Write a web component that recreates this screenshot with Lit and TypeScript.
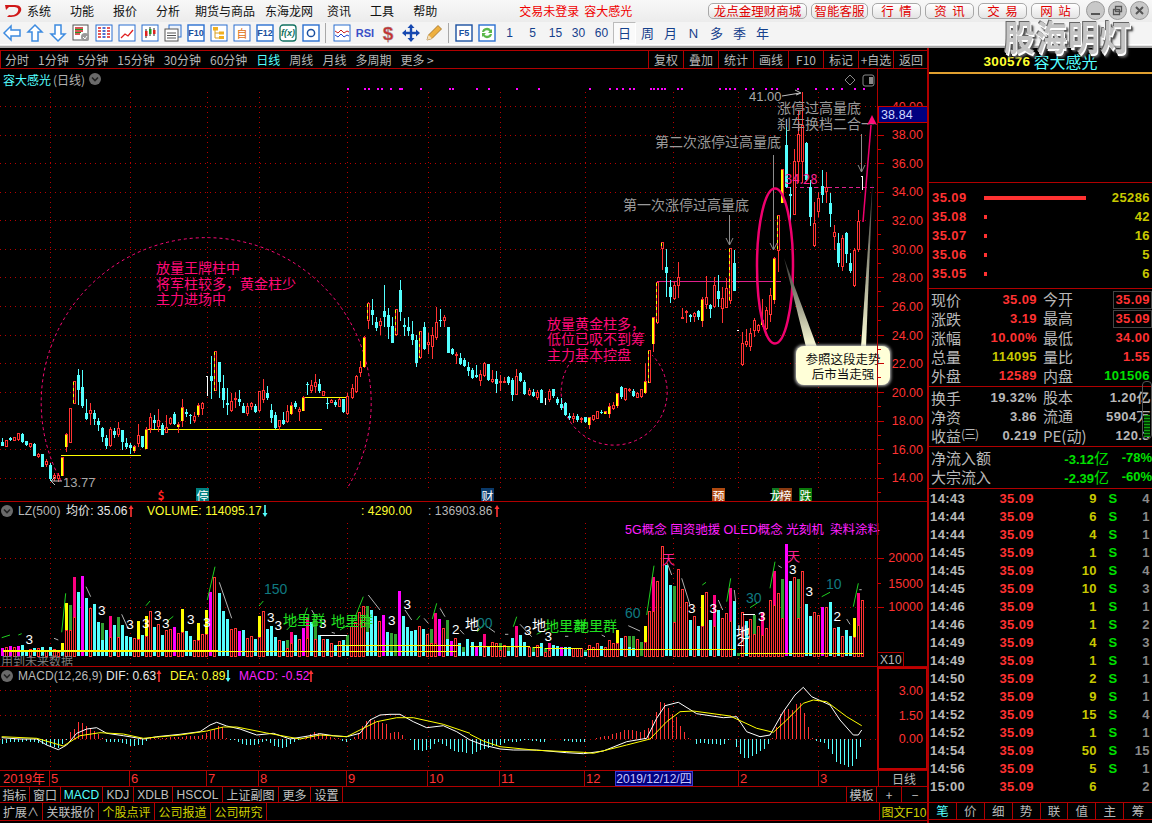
import { LitElement, html, css, svg } from "lit";
import { customElement } from "lit/decorators.js";

const C1 = `7 625 636 648 648 c;19 630 630 651 651 r;31 620 625 630 632 c;43 620 622 632 632 r;55 608 610 630 632 r;67 610 612 636 640 c;79 632 634 646 648 c;91 638 640 650 655 r;103 640 642 678 678 c;115 670 672 682 684 r;127 672 672 710 712 c;139 688 692 706 710 r;151 700 704 748 752 c;163 730 735 748 752 r;175 728 735 748 755 r;187 680 680 738 738 y;199 608 612 652 665 y;211 534 534 638 638 r;223 452 454 522 522 d;235 418 435 480 525 c;247 420 470 528 534 c;259 508 548 568 570 c;271 520 540 552 585 r;283 540 548 568 585 c;295 565 572 585 602 c;307 590 593 622 636 c;319 615 625 648 656 c;331 592 596 648 650 r;343 595 602 615 625 c;355 575 594 616 622 r;367 600 600 636 660 c;379 625 638 650 658 c;391 640 646 654 672 c;403 645 648 664 668 y;415 582 615 642 650 r;427 618 618 652 655 c;439 590 596 656 658 y;451 550 562 596 610 r;463 555 570 580 596 c;475 538 570 590 605 r;487 580 585 615 615 c;499 556 590 608 610 r;511 560 565 582 586 r;523 545 552 582 584 c;535 575 582 590 610 y;547 506 530 574 590 y;559 538 545 553 562 c;571 553 556 558 582 c;583 545 558 572 578 r;595 520 525 556 562 y;607 516 520 538 555 r;633 378 438 452 508 c;645 364 364 482 484 d;657 396 396 456 505 c;669 435 474 510 535 c;681 474 518 524 555 c;693 488 514 542 545 r;705 485 503 510 535 r;717 480 507 515 528 c;729 520 528 548 550 c;741 518 528 552 558 r;753 516 520 532 540 r;765 522 527 546 550 c;777 482 484 544 546 r;789 448 480 510 520 r;801 468 488 504 510 c;813 522 540 565 580 c;825 545 555 595 598 c;837 570 570 590 600 r;849 545 570 582 584 c;861 525 544 575 578 r;873 515 526 552 555 y;885 513 518 532 537 c;897 530 538 545 572 r;909 498 500 542 544 y;921 455 462 466 494 c;933 450 465 484 490 r;945 432 456 472 488 r;957 448 462 482 488 c;969 484 484 497 497 r;981 505 520 522 537 c;993 506 510 518 520 r;1005 510 515 525 532 c;1017 504 506 530 532 r;1029 508 508 545 548 c;1041 488 497 552 555 r;1056 462 474 504 506 r;1068 436 438 486 488 r;1080 394 412 430 440 r;1092 318 320 412 414 y;1104 216 218 272 296 d;1116 208 240 255 285 c;1128 262 276 294 302 c;1140 264 274 288 316 r;1152 165 243 260 290 c;1164 234 254 290 328 c;1176 262 288 338 340 c;1188 236 238 316 318 d;1200 150 180 245 272 c;1212 265 285 290 318 c;1224 260 292 302 318 c;1236 272 312 330 345 c;1249 315 330 398 410 c;1261 304 304 385 387 d;1273 277 290 356 360 c;1285 310 337 344 372 r;1297 290 316 352 388 r;1309 232 276 324 330 r;1321 237 270 272 290 c;1333 255 262 274 290 r;1345 290 292 368 370 c;1357 353 358 372 376 c;1369 366 372 372 402 r;1381 370 384 402 404 c;1393 385 390 408 412 c;1405 396 412 424 437 c`;
const C2 = `7 415 420 445 448 c;19 405 434 440 445 c;31 420 432 452 468 r;43 396 398 438 440 r;55 402 402 450 452 c;67 420 447 456 460 r;79 422 447 462 490 c;91 436 452 458 484 r;103 440 452 456 458 r;115 438 441 460 464 c;127 445 451 495 514 c;139 418 438 494 496 r;151 425 428 452 456 c;163 450 455 492 494 c;177 475 480 494 497 r;189 478 486 498 500 c;201 480 486 504 510 r;213 478 480 518 520 c;237 478 482 510 515 r;249 476 476 498 505 c;261 500 507 520 524 c;273 503 522 534 540 c;285 515 518 555 558 c;297 550 558 564 570 c;309 550 558 568 578 r;321 552 558 570 576 c;333 560 565 566 580 r;345 560 562 576 578 c;357 560 562 584 598 y;369 555 556 570 572 r;381 544 544 566 568 r;393 540 545 548 553 c;405 542 544 552 552 y;417 520 528 552 564 y;429 515 524 536 540 r;441 488 490 528 535 y;453 468 472 500 506 c;465 474 474 510 512 r;477 475 478 482 486 r;489 478 484 498 500 c;501 486 488 504 505 r;513 476 478 500 505 r;525 400 454 490 492 y;537 360 360 458 460 d;549 262 262 342 365 y;561 155 155 280 282 d;575 36 36 58 120 d;587 58 112 130 200 c;599 150 170 200 218 c;611 155 164 208 210 r;623 95 142 168 204 r;635 235 260 266 268 r;647 240 244 250 278 r;659 252 255 262 276 c;671 245 248 262 275 r;683 240 244 262 270 c;695 200 206 272 292 y;709 138 200 224 236 r;721 222 226 236 265 c;733 140 165 232 234 r;745 135 184 208 232 c;757 170 205 236 278 r;769 145 175 234 234 r;781 55 55 212 222 d;793 60 98 182 182 c;817 305 340 406 408 r;829 298 332 344 350 r;841 295 310 350 364 r;853 265 270 302 320 r;865 282 285 304 310 r;877 206 270 285 290 y;889 232 240 298 300 r;901 175 196 254 275 r;913 82 84 210 222 y`;
const C3 = `235 406 406 512 575 d;247 268 268 368 368 y;259 118 195 322 325 c;271 320 343 348 430 c;283 207 243 404 405 r;295 90 163 245 310 r;307 35 135 245 310 r;319 185 188 300 302 c;331 300 322 410 438 c;343 365 430 498 502 r;355 335 355 395 410 r;367 270 318 345 370 c;379 275 322 335 370 r;391 340 368 403 440 c;403 435 455 470 510 r;415 460 490 548 560 c;427 465 475 560 573 r;439 455 460 522 550 c;451 520 550 572 580 c;463 505 510 618 622 r;475 390 422 510 515 r`;

const V1 = `7m460 19r456 31m452 43r456 55m454 67c450 79c465 91r462 103c458 115r460 127c455 139r465 151c456 163r462 175r470 187y444-466c 199y324-405r 211g330-405r 223p246-365r 235c290 247m243 259c308 271r340 283c327 295c380 307g384-435c 319c405 331p364-425r 343c390 355g366-425r 367c390 379c424 391c426 403r430 415y378-432r 427c420 439y363-424r 451r349 463c396 475r388 487c420 499r406 511r402 523m396 535r414 547y342-412r 559c408 571c424 583r435 595y384-434r 607r418 619y345-416r 631m290 643r246 657c294 669c348 681c372 693r402 705r400 717m408 729c405 741r430 753r422 765c432 777y362-426r 789r348 801c402 813c393 825c426 837r436 849c438 861g435-460r 873p411-445r 885c420 897r432 909m400 921p366-430r 933c380 945g375-432r 957c420 969r432 981c432 993r445 1005c450 1017r438 1029c435 1041g420-450c 1053r392 1065r382 1077r352 1089r334 1101g334-410c 1113c345 1125c363 1137r378 1149m360 1161c410 1173g414-470c 1185g417 1197m288 1209c362 1221c396 1233c408 1245c404 1257r392 1269c402 1281r416 1293g402-445r 1305p354-445r 1317m372 1329r400 1341g375-432c 1353m438 1365r430 1377c444 1389g455-472c 1401c432`;
const V2 = `7c440 19m455 31c442 43p416-455r 55c455 67r440 79r445 91g444-465r 103r450 115g452-468c 127c430 139p393-455r 151c420 163c442 177r455 189g456-470c 201r450 213c445 225g460-472r 237p444-465r 249c450 261c452 273m455 285c456 297c456 309r458 321r460 333r460 345g464-472c 357r450 369r456 381r445 393c454 405r456 417r435 429r444 441y405-444r 453c430 465r424 477g423-456c 489g423-458c 501r432 513g442 525y393-440r 537r348 549p245-348r 561r258 575r153 587c210 599c270 611g272-380r 623r222 635r282 647r322 659c375 671r364 683c393 697y300-392r 709r292 721c375 733p300-392r 745c345 757r370 769r354 781p280-378r 793c318 803g474 817r352 829c378 841r372 853g360-418r 865r394 877p352-420r 889r400 901r316 913p228-330r 925r295 937g252-370r 949m148 961c258 973r246 985g252-370r 997r228 1009c328 1021c363 1033r352 1045r360 1057m336 1069r336 1081c322 1093r400 1105c396 1117r423 1129c405 1141c423 1153y370-426r 1165p293-390r 1177r316`;

const M1: number[] = [-14,-12,-10,-10,-8,-8,-6,-10,-10,-12,-16,-18,-20,-24,-26,-16,-2,20,30,52,48,38,32,24,16,2,-8,-8,-10,-10,-12,-16,-20,-20,-18,-18,-6,2,3,4,4,4,6,6,6,6,8,8,8,10,12,18,24,30,38,36,4,-2,-4,-8,-16,-18,-18,-18,-14,-8,-6,-12,-20,-24,-26,-24,-14,-10,-4,2,8,14,20,18,14,8,6,4,3,-6,-10,-2,6,18,40,55,60,58,52,48,44,18,20,20,12,0,-2,-32,-34,-36,-34,-30,-14,-10,-14,-20,-30,-36,-40,-40,-42];
const M2: number[] = [-44,-38,-34,-30,-26,-22,-20,-18,-12,-6,-8,-8,-6,-4,-4,-6,-6,-8,-8,0,0,0,0,-6,-6,-8,-8,-8,-8,0,0,2,5,8,10,14,18,22,26,28,26,24,22,26,34,56,80,110,108,92,76,66,40,22,2,0,-14,-12,-12,-14,-14,-16,-18,-14,-2,0,-24,-46,-56,-56,-52,-46,-36,-30,-14,4,36,74,88,90,88,104,108,78,36,4,-6,-10,-12,-30,-46,-70,-74,-78,-84,-80,-60,-24];

const WHITE1 = "5,218 60,222 110,222 140,240 175,254 200,240 230,205 260,192 290,188 320,205 370,212 430,222 470,215 540,208 600,200 630,180 650,172 680,183 720,192 770,210 820,205 870,222 930,212 960,206 1000,212 1040,215 1080,205 1110,165 1140,150 1170,148 1200,148 1240,170 1280,188 1330,182 1370,200 1410,225";
const YEL1 = "5,215 110,220 190,243 240,212 300,203 370,207 430,220 540,210 620,198 670,186 710,186 800,204 900,222 960,210 1040,215 1090,190 1130,170 1190,158 1240,158 1330,178 1410,205";
const WHITE2 = "0,225 40,240 90,252 130,255 200,255 290,263 340,266 400,258 470,230 530,220 560,160 585,122 625,112 680,146 760,158 800,155 830,200 870,215 900,210 940,140 975,90 1000,67 1025,95 1080,120 1110,165 1150,210 1165,210 1175,195";
const YEL2 = "0,208 40,228 90,245 200,256 340,262 370,265 470,240 540,222 590,170 630,140 670,138 780,153 860,190 910,202 950,165 1000,115 1030,105 1070,110 1130,155 1175,182";

const pts = (s: string, ox: number, oy: number) =>
  s.split(" ").map((p) => { const [x, y] = p.split(",").map(Number); return `${(ox + x / 3).toFixed(1)},${(oy + y / 3).toFixed(1)}`; }).join(" ");

const candles = (src: string, ox: number, oy: number) =>
  src.split(";").map((row) => {
    const [xs, a, b, c, d, t] = row.split(" ");
    const X = Math.round(ox + +xs / 3);
    const wt = Math.round(oy + +a / 3), bt = Math.round(oy + +b / 3), bb = Math.max(Math.round(oy + +c / 3), Math.round(oy + +b / 3) + 1), wb = Math.round(oy + +d / 3);
    if (t === "c") {
      return svg`<rect x=${X} y=${wt} width="1" height=${Math.max(wb - wt, 1)} class="fc"></rect><rect x=${X - 1} y=${bt} width="3" height=${bb - bt} class="fc"></rect>`;
    }
    return svg`
      ${wt < bt ? svg`<rect x=${X} y=${wt} width="1" height=${bt - wt} class="fr"></rect>` : ""}
      ${wb > bb ? svg`<rect x=${X} y=${bb} width="1" height=${wb - bb} class="fr"></rect>` : ""}
      <rect x=${X - 0.5} y=${bt + 0.5} width="2" height=${bb - bt - 1 > 0 ? bb - bt - 1 : 0.5} class="hollow"></rect>
      ${t === "y" ? svg`<rect x=${X - 1} y=${bt + 1} width="2" height=${Math.max(bb - bt - 1, 1)} class="fy"></rect>` : ""}
      ${t === "d" ? svg`<line x1=${X - 0.5} x2=${X - 0.5} y1=${bt + 1} y2=${bb} class="dash-y"></line>` : ""}`;
  });

const volClass: Record<string, string> = { m: "fm", c: "fc", y: "fy", g: "fg", p: "fp" };
const VBOT = 656;
const volumes = (src: string, ox: number) =>
  src.split(" ").map((tok) => {
    const m = tok.match(/^(\d+)([a-z])(\d+)(?:-(\d+)([a-z]))?$/);
    if (!m) return "";
    const X = Math.round(ox + +m[1] / 3);
    const top = Math.round(495 + +m[3] / 3);
    const col = m[2];
    const split = m[4] ? Math.round(495 + +m[4] / 3) : VBOT;
    const hollow = (y1: number) => svg`<rect x=${X - 0.5} y=${y1 + 0.5} width="2" height=${Math.max(VBOT - y1 - 0.5, 0.5)} class="hollow"></rect>`;
    if (col === "r") return hollow(top);
    const head = svg`<rect x=${X - 1} y=${top} width="3" height=${split - top} class=${volClass[col]}></rect>`;
    if (!m[5]) return head;
    if (m[5] === "r") return svg`${hollow(split)}${head}`;
    return svg`${head}<rect x=${X - 1} y=${split} width="3" height=${VBOT - split} class=${volClass[m[5]]}></rect>`;
  });

const macdBars = (arr: number[], ox: number) =>
  arr.map((v, i) => {
    const X = Math.round(ox + (7 + i * 12) / 3);
    const h = Math.abs(v) / 3;
    if (h === 0) return "";
    return svg`<rect x=${X} y=${v > 0 ? 739 - h : 739} width="1" height=${h} class=${v > 0 ? "fr" : "fc"}></rect>`;
  });

const VGRID = [50, 130, 207, 259, 347, 428, 500, 585, 673, 738, 818];
const vlines = (y1: number, y2: number) => VGRID.map((x) => svg`<line x1=${x + 0.5} x2=${x + 0.5} y1=${y1} y2=${y2} class="dot"></line>`);
const hline = (y: number) => svg`<line x1="0" x2="878" y1=${y + 0.5} y2=${y + 0.5} class="dot"></line>`;

const T = (x: number, y: number, s: string, cls: string) => svg`<text x=${x} y=${y} class=${cls}>${s}</text>`;
const upArrow = (x: number, y: number, cls: string, up = true) => svg`
  <path d=${up ? `M${x} ${y - 6}l-2.5 4h1.7v8h1.6v-8h1.7z` : `M${x} ${y + 6}l-2.5 -4h1.7v-8h1.6v8h1.7z`} class=${cls}></path>`;
const chev = (x: number, y: number) => svg`
  <circle cx=${x} cy=${y} r="6" fill="#6a6a6a"></circle>
  <path d=${`M${x - 3} ${y - 1.5}l3 3l3 -3`} fill="none" stroke="#222" stroke-width="1.6"></path>`;
const grayArrow = (x: number, y1: number, y2: number) => svg`
  <path d=${`M${x + 0.5} ${y1}V${y2}M${x - 3} ${y2 - 7}L${x + 0.5} ${y2}L${x + 4} ${y2 - 7}`} fill="none" stroke="#8c8c8c" stroke-width="1"></path>`;

const PRICE_Y = [[478, "14.00"], [449.5, "16.00"], [421, "18.00"], [392.5, "20.00"], [363.5, "22.00"], [335.5, "24.00"], [306.5, "26.00"], [277.5, "28.00"], [249.5, "30.00"], [220.5, "32.00"], [192, "34.00"], [163.5, "36.00"], [135, "38.00"], [106.5, "40.00"]] as [number, string][];

const DOTS = [945,990,1000,1025,1035,1060,1085,1090,1143,1220,1230,1295,1328,1404,1462].map((z) => z / 2.72).concat([35,90,110,125,145,155,200,210,220,230,240,275,285,388,405,415,430,460,480,515,530,545,600,650,680,695,720,755,780].map((z) => 576 + z / 2.72));

const GREEN_STROKES: [number, string][] = [
  [0, "5,428 30,420"],[0, "55,420 65,416"],[0, "185,412 197,295"],[0, "438,332 450,318"],[0, "500,380 520,364"],[0, "622,315 645,215"],[0, "777,333 790,318"],[0, "860,405 895,370"],[0, "910,370 922,338"],[0, "1020,405 1060,380 1090,305"],[0, "1250,375 1260,362"],[0, "1297,372 1310,325"],
  [470, "530,360 552,212"],[470, "130,395 140,365"],[470, "200,418 215,410"],[470, "770,320 782,250"],[470, "697,270 708,262"],[470, "900,280 915,200"],[470, "840,338 865,322"],[470, "1055,305 1080,292"],[470, "1150,335 1165,265"],[470, "22,410 45,385"],
];
const WHITE_STROKES: [number, string][] = [
  [0, "258,275 272,305"],[0, "162,430 175,435"],[0, "365,358 385,402"],[0, "658,262 695,370"],[0, "1105,300 1140,345"],[0, "1215,345 1235,375"],[0, "1272,370 1285,385"],[0, "1320,340 1335,365"],[0, "1380,405 1392,418"],[0, "935,345 950,370"],[0, "995,412 1005,415"],
  [470, "52,395 75,412"],[470, "150,388 185,425"],[470, "475,392 510,408"],[470, "592,205 605,240"],[470, "635,250 660,330"],[470, "745,315 758,345"],[470, "793,285 797,320"],[470, "925,212 935,218"],[470, "1130,372 1140,388"],[470, "105,418 115,418"],[470, "285,424 295,424"],[470, "395,420 405,425"],[470, "1168,284 1175,284"],
];
const VOL_LABELS: [number, number, string, string][] = [
  [0,88,"3","v3"],[0,305,"3","v3"],[0,390,"3","v3"],[0,437,"3","v3"],[0,473,"3","v3"],[0,497,"3","v3"],[0,572,"3","v3"],[0,620,"3","v3"],[0,812,"3","v3"],[0,835,"3","v3"],[0,968,"3","v3"],[0,1175,"3","v3"],[0,1222,"3","v3"],[0,1367,"2","v3"],
  [470,173,"3","v3"],[470,235,"3","v3"],[470,665,"3","v3"],[470,730,"3","v3"],[470,875,"3","v3"],[470,968,"3","v3"],[470,1018,"3","v3"],[470,812,"2","v3"],[470,1102,"2","v3"],
];
const VOL_Y: number[] = [432,345,388,385,360,385,373,382,367,392,385,376,328,404,405,424,340,340,365,222,288,438,364];

const ICONS: Record<string, unknown> = {
  left: svg`<path d="M2 10l7-7v4h9v6H9v4z" fill="#fff" stroke="#3d8be0" stroke-width="1.5"></path>`,
  up: svg`<path d="M10 2l7 7h-4v9H7V9H3z" fill="#fff" stroke="#3d8be0" stroke-width="1.5"></path>`,
  down: svg`<path d="M10 18l7-7h-4V2H7v9H3z" fill="#fff" stroke="#3d8be0" stroke-width="1.5"></path>`,
  check: svg`<rect x="2" y="2" width="15" height="15" fill="#fff" stroke="#555"></rect><path d="M4 5h8M4 8h8M4 11h5" stroke="#c22" stroke-width="1.4"></path><path d="M4 6.5h8M4 9.5h6" stroke="#292" stroke-width="1"></path><circle cx="14" cy="14" r="4" fill="#999"></circle><path d="M12 14l2 2 2-3" stroke="#fff" fill="none"></path>`,
  grid: svg`<rect x="2" y="2" width="16" height="16" fill="#fff" stroke="#2a6fd0"></rect><path d="M4 5h3M4 8h3M4 11h3M4 14h3" stroke="#d22" stroke-width="1.6"></path><path d="M8.5 5h3M8.5 8h3M8.5 11h3M8.5 14h3" stroke="#1a3fc0" stroke-width="1.6"></path><path d="M13 5h3M13 8h3M13 11h3M13 14h3" stroke="#d22" stroke-width="1.6"></path>`,
  line: svg`<rect x="2" y="2" width="16" height="16" fill="#fff" stroke="#2a6fd0"></rect><path d="M4 15l4-4 3 2 5-6" stroke="#e02020" fill="none" stroke-width="1.3"></path>`,
  candle: svg`<rect x="2" y="2" width="16" height="16" fill="#fff" stroke="#2a6fd0"></rect><path d="M6 6v9M10 4v9M14 5v8" stroke="#222"></path><rect x="5" y="8" width="2.5" height="5" fill="#d22"></rect><rect x="9" y="6" width="2.5" height="5" fill="#292"></rect><rect x="13" y="7" width="2.5" height="4" fill="#d22"></rect>`,
  win: svg`<rect x="6" y="2" width="12" height="12" fill="#eef4fc" stroke="#2a6fd0"></rect><rect x="2" y="6" width="13" height="12" fill="#fff" stroke="#555"></rect><path d="M4 10h9M4 12.5h9M4 15h9" stroke="#555"></path>`,
  f10: svg`<rect x="2" y="2" width="16" height="16" fill="#fff" stroke="#2a6fd0" stroke-width="1.4"></rect><text x="10" y="10" class="ict">F10</text>`,
  tree: svg`<rect x="2" y="2" width="16" height="16" fill="#fff" stroke="#2a6fd0"></rect><path d="M6 7v8h4M6 10h4" stroke="#d8a020" fill="none"></path><rect x="4" y="4" width="5" height="3.5" fill="#f0b020"></rect><rect x="10" y="8.5" width="5" height="3" fill="#f0b020"></rect><rect x="10" y="13" width="5" height="3" fill="#f0b020"></rect>`,
  zi: svg`<rect x="2" y="2" width="16" height="16" fill="#fff" stroke="#2a6fd0"></rect><text x="10" y="10" class="ict ict-o">自</text>`,
  f12: svg`<rect x="2" y="2" width="16" height="16" fill="#fff" stroke="#2a6fd0" stroke-width="1.4"></rect><text x="10" y="10" class="ict">F12</text>`,
  fx: svg`<rect x="2" y="2" width="16" height="16" rx="3" fill="#fff" stroke="#107060" stroke-width="1.3"></rect><text x="10" y="10" class="ict ict-t">f(x)</text>`,
  o: svg`<rect x="2" y="2" width="16" height="16" fill="#fff" stroke="#2a6fd0" stroke-width="1.4"></rect><circle cx="10" cy="10" r="3.6" fill="none" stroke="#1a50a0" stroke-width="1.5"></circle>`,
  wave: svg`<rect x="2" y="2" width="16" height="16" fill="#fff" stroke="#2a6fd0"></rect><path d="M3 8l3 2 3-3 3 3 3-2 2 1" stroke="#c22" fill="none"></path><path d="M3 12l3 2 3-3 3 3 3-2 2 1" stroke="#24c" fill="none"></path>`,
  rsi: svg`<text x="10" y="10" class="ict ict-r">RSI</text>`,
  dollar: svg`<text x="10" y="10" class="ict ict-d">$</text>`,
  move: svg`<path d="M10 1l3.5 4h-2.3v3.8H15V6.500l4 3.500-4 3.500v-2.300h-3.800V15h2.300L10 19l-3.500-4h2.300v-3.800H5v2.300L1 10l4-3.500v2.300h3.800V5H6.500z" fill="#1648b0"></path>`,
  pencil: svg`<path d="M3 17l1.500-5L14 2.500l3.500 3.500L8 15.500z" fill="#eeb040" stroke="#9a6a20" stroke-width=".8"></path><path d="M3 17l1.500-5 3.500 3.500z" fill="#f4dfb8"></path>`,
  f5: svg`<rect x="2" y="2" width="16" height="16" fill="#fff" stroke="#1a50a0" stroke-width="1.4"></rect><text x="10" y="10" class="ict">F5</text>`,
  refresh: svg`<rect x="2" y="2" width="16" height="16" fill="#fff" stroke="#2a6fd0" stroke-width="1.4"></rect><path d="M5 9a5 5 0 0 1 9-2l1-1v4h-4l1.500-1.500A3.200 3.200 0 0 0 7 9zM15 11a5 5 0 0 1-9 2l-1 1v-4h4l-1.500 1.500A3.200 3.200 0 0 0 13 11z" fill="#5bb84a"></path>`,
};
const ic = (n: string) => html`<span class="tb"><svg width="20" height="20" viewBox="0 0 20 20">${ICONS[n]}</svg></span>`;

const BOOK = [["35.09", 25286], ["35.08", 42], ["35.07", 16], ["35.06", 5], ["35.05", 6]] as [string, number][];
const TICKS = [["14:43",9,"S",4],["14:44",6,"S",1],["14:44",4,"S",1],["14:45",1,"S",1],["14:45",10,"S",4],["14:45",10,"S",3],["14:46",1,"S",1],["14:46",1,"S",2],["14:49",4,"S",3],["14:49",1,"S",1],["14:50",2,"S",1],["14:52",9,"S",1],["14:52",15,"S",4],["14:52",1,"S",1],["14:54",50,"S",15],["14:56",5,"S",1],["15:00",6,"",2]] as [string, number, string, number][];

@customElement("app-root")
export class AppRoot extends LitElement {
  static styles = css`
    :host { display: block; position: relative; width: 1152px; height: 823px; background: #000; overflow: hidden;
      font-family: "Noto Sans CJK SC", "Liberation Sans", sans-serif; font-size: 12px; line-height: 1; }
    .menubar { height: 22px; background: linear-gradient(#f8f8f8, #ececec); display: flex; align-items: center; color: #111; position: relative; }
    .logo { width: 20px; margin-left: 4px; display: flex; }
    .menu { display: flex; }
    .menu span { margin-right: 19px; }
    .login { color: #f00000; margin-left: 63px; display: flex; gap: 5px; }
    .btns { display: flex; margin-left: auto; gap: 4px; margin-right: 72px; }
    .btn { height: 16px; padding: 0; display: flex; align-items: center; justify-content: center; color: #e00000;
      background: linear-gradient(#fff, #e4e4e4); border: 1px solid #a8a8a8; border-radius: 5px; box-sizing: border-box; font-size: 12.5px; }
    .w97 { width: 99px; } .w57 { width: 57px; } .w49 { width: 49px; }
    .wins { position: absolute; right: 3px; top: 1px; display: flex; gap: 3px; }
    .win { width: 19px; height: 19px; border-radius: 50%; background: #c8c8c8; border: 1px solid #9a9a9a; box-sizing: border-box; display: flex; align-items: center; justify-content: center; }
    .toolbar { height: 23px; box-sizing: border-box; background: #f4f4f4; display: flex; align-items: center; border-bottom: 1px solid #fff; color: #14408c; font-family: "Liberation Sans", "Noto Sans CJK SC", sans-serif; }
    .tb { width: 23px; height: 22px; flex: none; display: flex; align-items: center; justify-content: center; }
    .sep { width: 1px; height: 20px; background: #a8a8a8; flex: none; }
    .sep1 { margin: 0 4px 0 3px; } .sep2 { margin: 0 3px 0 3px; }
    .num { font-size: 12px; }
    .num.on { background: #fafafa; border: 1px solid; border-color: #bbb #fff #fff #bbb; box-sizing: border-box; font-size: 13px; }
    .cjk { font-size: 13px; }
    .ict { font: bold 9px "Liberation Sans", sans-serif; fill: #1a50a0; text-anchor: middle; }
    .ict-o { fill: #e07010; font: 11px "Noto Sans CJK SC", sans-serif; }
    .ict-t { fill: #107060; font-style: italic; }
    .ict-r { font-size: 11px; fill: #3a50c8; }
    .ict-d { font-size: 19px; fill: #c83030; stroke: #999; stroke-width: .4; }
    .gray-strip { height: 2px; background: #a8a8a8; }
    .strip2 { height: 1px; background: #e8e8e8; }
    .body { height: 775px; display: flex; }
    .left { width: 928px; flex: none; display: flex; flex-direction: column; }
    .tabs { margin-top: 2px; height: 19px; box-sizing: border-box; border-top: 1px solid #b00000; border-bottom: 1px solid #b00000; border-left: 1px solid #b00000; display: flex; color: #b8b8b8; align-items: center; flex: none; }
    .tabs-l { display: flex; gap: 9px; padding-left: 4px; flex: 1; }
    .tabs-l .on { color: #54ffff; }
    .tabs-r { display: flex; height: 100%; }
    .tabs-r span { width: 35px; display: flex; align-items: center; justify-content: center; border-left: 1px solid #b00000; box-sizing: border-box; white-space: nowrap; }
    svg.pane { display: block; flex: none; }
    .axis { height: 16px; box-sizing: border-box; border-top: 1px solid #b00000; display: flex; flex: none; color: #ff3232; font-family: "Liberation Sans", sans-serif; font-size: 13px; position: relative; }
    .axis .cell { flex: none; padding-left: 1px; border-left: 1px solid #b00000; height: 100%; display: flex; align-items: center; box-sizing: border-box; white-space: nowrap; }
    .axis .y { width: 49px; border-left: 0; padding-left: 3px; font-family: "Liberation Sans", "Noto Sans CJK SC", sans-serif; }
    .axis .date { width: 78px; background: #000080; color: #c8c8ff; border: 1px solid #3a3ad0; justify-content: center; font-size: 12px; font-family: "Liberation Sans", "Noto Sans CJK SC", sans-serif; padding: 0; }
    .axis .end { margin-left: auto; width: 50px; justify-content: center; color: #b8b8b8; font-family: "Noto Sans CJK SC", sans-serif; font-size: 12px; }
    .row { height: 16px; box-sizing: border-box; border-top: 1px solid #b00000; display: flex; flex: none; color: #c0c0c0; align-items: stretch; }
    .row span { display: flex; align-items: center; justify-content: center; border-right: 1px solid #b00000; box-sizing: border-box; flex: none; }
    .row .lat { font-family: "Liberation Sans", "Noto Sans CJK SC", sans-serif; }
    .row .c { color: #54ffff; }
    .row .yl { color: #d0d000; }
    .row .push { margin-left: auto; border-left: 1px solid #b00000; }
    .row2 { height: 19px; border-bottom: 1px solid #b00000; }
    .right { flex: 1; border-left: 2px solid #b00000; box-sizing: border-box; margin-left: -1px; display: flex; flex-direction: column; position: relative; min-width: 0; }
    .code { height: 24px; margin-top: 2px; border-bottom: 2px solid #e0a030; display: flex; align-items: center; justify-content: center; gap: 3px; font-size: 16px; color: #54ffff; box-sizing: border-box; flex: none; }
    .code b { color: #ffff30; font: bold 13.500px "Liberation Sans", sans-serif; letter-spacing: .3px; }
    .blank { height: 109px; border-bottom: 1px solid #b00000; box-sizing: border-box; flex: none; }
    .book { height: 106px; padding-top: 5px; box-sizing: border-box; border-bottom: 1px solid #b00000; flex: none; }
    .brow { height: 19px; display: flex; align-items: center; padding: 0 2px 0 3px; }
    .val { font: bold 13px "Liberation Sans", sans-serif; letter-spacing: .4px; color: #ff3232; }
    .brow .bar-wrap { width: 102px; margin-left: 17px; display: flex; }
    .brow .bar { height: 4px; background: #ff3232; }
    .brow .q { margin-left: auto; color: #c8c800; }
    .sec { box-sizing: border-box; border-bottom: 1px solid #b00000; color: #b8b8b8; font-size: 15px; flex: none; }
    .s5 { height: 98px; padding-top: 1px; }
    .s3 { height: 60px; padding-top: 1px; }
    .s2 { height: 42px; padding-top: 1px; }
    .sr { height: 19px; display: flex; align-items: center; padding-left: 2px; position: relative; }
    .sr .lb { width: 106px; flex: none; display: flex; justify-content: space-between; white-space: nowrap; }
    .sr .lb .val { margin-left: auto; }
    .sr .lb2 { margin-left: 6px; flex: 1; padding-right: 2px; display: flex; justify-content: space-between; white-space: nowrap; }
    .val.g { color: #00e000; } .val.y { color: #c8c800; } .val.w { color: #b8b8b8; }
    .boxv { border: 1px solid #444; box-sizing: border-box; height: 18px; width: 39px; display: flex; align-items: center; justify-content: flex-end; margin-right: -2px; padding-right: 1px; }
    .narrow { font-size: 12px; letter-spacing: -1px; }
    .flow { display: flex; gap: 0; }
    .flow .amt { flex: 1; margin-left: 30px; text-align: right; color: #00e000; font: bold 13px "Liberation Sans", "Noto Sans CJK SC", sans-serif; white-space: nowrap; }
    .flow .amt i { font: 15px "Noto Sans CJK SC", sans-serif; }
    .flow .pct { width: 34px; margin-left: 9px; text-align: right; color: #00e000; font: bold 13px "Liberation Sans", sans-serif; }
    .ticks { height: 314px; box-sizing: border-box; border-bottom: 1px solid #b00000; flex: none; }
    .trow { height: 18px; display: grid; grid-template-columns: 50px 54px 63px 32px 1fr; align-items: center; padding: 0 2px 0 1px; text-align: right; }
    .trow .tm { text-align: left; color: #b8b8b8; }
    .trow .qt { color: #c8c800; }
    .trow .sd { color: #00e000; text-align: center; }
    .trow .n { color: #8a8a8a; }
    .btabs { height: 17px; display: flex; flex: none; box-sizing: border-box; color: #b8b8b8; border-bottom: 1px solid #b00000; }
    .btabs span { width: 28px; display: flex; align-items: center; justify-content: center; border-right: 1px solid #b00000; box-sizing: border-box; font-size: 12.500px; }
    .btabs .on { color: #54ffff; }
    .scroll { position: absolute; right: 0; top: 333px; width: 10px; height: 58px; border: 1px solid #555; border-radius: 4px; box-sizing: border-box; display: flex; align-items: flex-end; padding: 1px; }
    .scroll i { display: block; width: 100%; height: 22px; background: repeating-linear-gradient(#10a010 0 1px, #004000 1px 3px); }
    .wm { position: absolute; left: 1004px; top: 18px; font-size: 31px; font-weight: 700; color: #c4c4c4; letter-spacing: 1px; white-space: nowrap; line-height: 1;
      transform: scaleY(1.15); transform-origin: top left;
      text-shadow: 1px 1px 0 #fff, -1px -1px 0 #666, 2px 2px 1px #555, 3px 3px 2px #444; }

    .dot { stroke: #b80000; stroke-width: 1; stroke-dasharray: 1 4; shape-rendering: crispEdges; }
    .tick { stroke: #c80000; shape-rendering: crispEdges; }
    .frame { stroke: #b00000; shape-rendering: crispEdges; fill: none; }
    .fc { fill: #54ffff; shape-rendering: crispEdges; }
    .fr { fill: #ff3232; shape-rendering: crispEdges; }
    .fy { fill: #ffff00; shape-rendering: crispEdges; }
    .fm { fill: #ff00ff; shape-rendering: crispEdges; }
    .fg { fill: #30a030; shape-rendering: crispEdges; }
    .fp { fill: #ff0080; shape-rendering: crispEdges; }
    .hollow { fill: #000; stroke: #ff3232; stroke-width: 1; shape-rendering: crispEdges; }
    .dash-y { stroke: #ffff00; stroke-dasharray: 3 3; shape-rendering: crispEdges; }
    .fwhite { fill: #fff; shape-rendering: crispEdges; }
    text { dominant-baseline: central; }
    .ax { font: 12.500px "Liberation Sans", sans-serif; fill: #ff3232; text-anchor: end; }
    .ann { font: 14px "Noto Sans CJK SC", sans-serif; fill: #ff0a78; }
    .ann-g { font: 14px "Noto Sans CJK SC", sans-serif; fill: #9a9a9a; }
    .nm { font: 12px "Noto Sans CJK SC", sans-serif; fill: #54ffff; }
    .nm2 { font: 12px "Noto Sans CJK SC", sans-serif; fill: #b0b0b0; }
    .lat { font: 12px "Liberation Sans", "Noto Sans CJK SC", sans-serif; fill: #b8b8b8; letter-spacing: .1px; }
    .lat-w { fill: #e8e8e8; } .lat-y { fill: #ffff30; } .lat-m { fill: #ff20ff; }
    .num-g { font: 13px "Liberation Sans", sans-serif; fill: #a8a8a8; }
    .mk { font: 12px "Noto Sans CJK SC", sans-serif; fill: #fff; text-anchor: middle; }
    .callout { font: 12.500px "Noto Sans CJK SC", sans-serif; fill: #111; text-anchor: middle; }
    .v3 { font: 13.500px "Liberation Sans", sans-serif; fill: #fff; text-anchor: middle; }
    .vg { font: 14px "Noto Sans CJK SC", sans-serif; fill: #20e020; }
    .vw { font: 14px "Noto Sans CJK SC", sans-serif; fill: #fff; text-anchor: middle; }
    .vt { font: 14px "Liberation Sans", sans-serif; fill: #107a80; }
    .concept { font: 12.500px "Liberation Sans", "Noto Sans CJK SC", sans-serif; fill: #ff20ff; }
    .tian { font: 13px "Noto Sans CJK SC", sans-serif; fill: #ff2090; }
    .future { font: 12px "Noto Sans CJK SC", sans-serif; fill: #7a7a7a; }
    .sg { fill: none; stroke: #20d020; stroke-width: 1; }
    .sw { fill: none; stroke: #b0b0b0; stroke-width: 1; }
    .ly { stroke: #ffff00; stroke-width: 1; shape-rendering: crispEdges; }
    .ly2 { stroke: #ffff00; stroke-width: 2; shape-rendering: crispEdges; }
    .lw { stroke: #fff; stroke-width: 1; shape-rendering: crispEdges; }
    .arc { fill: none; stroke: #ff0a78; stroke-width: 1; stroke-dasharray: 3 3; }
    .ellipse { fill: none; stroke: #f0006e; stroke-width: 2.500; }
    .pline { stroke: #e0208c; stroke-width: 1; shape-rendering: crispEdges; }
    .pdash { stroke: #e0208c; stroke-width: 1; stroke-dasharray: 4 3; shape-rendering: crispEdges; }
    .pl-w { fill: none; stroke: #fff; stroke-width: 1; }
    .pl-y { fill: none; stroke: #ffff00; stroke-width: 1; }
    .arrow-r { fill: #ff3232; } .arrow-c { fill: #54ffff; }
  `;

  private mainPane() {
    return svg`<svg class="pane" width="928" height="433" viewBox="0 69 928 433">
      ${PRICE_Y.map(([y]) => hline(Math.floor(y)))}
      ${vlines(92, 490)}
      ${DOTS.map((x) => svg`<rect x=${Math.round(x)} y="88" width="2" height="2" class="fm"></rect>`)}

      <path d="M61 481A165 165 0 1 1 348 487" class="arc"></path>
      <path d="M572 360A53 53 0 1 0 652 355" class="arc"></path>

      <g>
        <line x1="61" x2="141" y1="455.500" y2="455.500" class="ly"></line>
        <line x1="145" x2="322" y1="429.500" y2="429.500" class="ly"></line>
        <line x1="302" x2="347" y1="397.500" y2="397.500" class="ly"></line>
      </g>
      <line x1="657" x2="781" y1="281.500" y2="281.500" class="pline"></line>
      <line x1="786" x2="877" y1="187.500" y2="187.500" class="pdash"></line>
      ${candles(C1, 0, 230)}
      ${candles(C2, 470, 230)}
      ${candles(C3, 700, 80)}
      <rect x="206" y="376" width="2" height="1" class="fwhite"></rect>
      <rect x="207" y="376" width="1" height="20" class="fwhite"></rect>
      <rect x="545" y="398" width="1" height="7" class="fwhite"></rect>
      <rect x="737" y="330" width="2" height="1" class="fwhite"></rect>
      <rect x="861" y="176" width="2" height="1" class="fwhite"></rect>
      <rect x="862" y="176" width="1" height="14" class="fwhite"></rect>

      ${T(156, 267, "放量王牌柱中", "ann")}
      ${T(156, 283, "将军柱较多，黄金柱少", "ann")}
      ${T(156, 298, "主力进场中", "ann")}
      ${T(547, 323, "放量黄金柱多，", "ann")}
      ${T(547, 338, "低位已吸不到筹", "ann")}
      ${T(547, 354, "主力基本控盘", "ann")}
      ${T(623, 204, "第一次涨停过高量底", "ann-g")}
      ${T(655, 141, "第二次涨停过高量底", "ann-g")}
      ${T(777, 107, "涨停过高量底", "ann-g")}
      ${T(777, 123, "刹车换档二合一", "ann-g")}
      ${T(749, 96, "41.00", "num-g")}
      <path d="M782 96l18-3M795 90l6 3-5 2" fill="none" stroke="#c0c0c0"></path>
      ${T(63, 482, "13.77", "num-g")}
      <path d="M51 481h11M55 477l-4 4 4 4" fill="none" stroke="#c0c0c0"></path>
      ${T(785, 178, "34.28", "tian")}
      ${grayArrow(729, 215, 245)}
      ${grayArrow(773, 155, 250)}
      ${grayArrow(861, 134, 172)}

      <ellipse cx="775" cy="266" rx="18" ry="77.500" class="ellipse"></ellipse>
      <path d="M863 222L871 125" stroke="#f0006e" stroke-width="1.500" fill="none"></path>
      <path d="M872 115l-5 10q5-3 10 0z" fill="#ff0a78"></path>

      <defs>
        <linearGradient id="tg" x1="0" y1="1" x2="0" y2="0">
          <stop offset="0" stop-color="#ffffd8"></stop><stop offset="1" stop-color="#303030"></stop>
        </linearGradient>
        <filter id="glow" x="-10%" y="-20%" width="120%" height="140%"><feGaussianBlur stdDeviation="1.500"></feGaussianBlur></filter>
      </defs>
      <path d="M784 258L817 347L806 347Z" fill="url(#tg)"></path>
      <path d="M872.700 180L866 347L861 347Z" fill="url(#tg)"></path>
      <rect x="795" y="345" width="96" height="41" rx="8" fill="#bbb" filter="url(#glow)"></rect>
      <rect x="796" y="346" width="94" height="39" rx="8" fill="#ffffd8"></rect>
      ${T(843, 358, "参照这段走势", "callout")}
      ${T(843, 373, "后市当走强", "callout")}

      ${T(3, 79, "容大感光", "nm")}
      ${T(53, 79, "(日线)", "nm2")}
      ${chev(95, 79)}
      <path d="M850 75l5 5-5 5-5-5z" fill="none" stroke="#8a8a8a"></path>
      <rect x="863" y="75" width="11" height="11" rx="2" fill="none" stroke="#8a8a8a"></rect>
      <rect x="869" y="77" width="4" height="7" fill="#8a8a8a"></rect>

      <text x="161" y="494" class="mk" style="fill:#ff2020;font-weight:700">$</text>
      <rect x="196" y="488" width="13" height="14" fill="#008080"></rect>${T(202.500, 495, "停", "mk")}
      <rect x="481" y="488" width="13" height="14" fill="#0a3a6a"></rect>${T(487.500, 495, "财", "mk")}
      <rect x="712" y="488" width="13" height="14" fill="#b04a10"></rect>${T(718.500, 495, "预", "mk")}
      <rect x="772" y="488" width="7" height="14" fill="#107a20"></rect><rect x="779" y="488" width="13" height="14" fill="#8a3a10"></rect>
      ${T(775.500, 495, "龙", "mk")}${T(785.500, 495, "榜", "mk")}
      <rect x="799" y="488" width="13" height="14" fill="#0a7a0a"></rect>${T(805.500, 495, "跌", "mk")}

      <line x1="877.500" x2="877.500" y1="69" y2="502" class="frame"></line>
      ${PRICE_Y.map(([y, s]) => svg`
        <line x1="878" x2="884" y1=${Math.floor(y) + 0.5} y2=${Math.floor(y) + 0.5} class="tick"></line>
        <line x1="878" x2="881" y1=${Math.floor(y) + 14.5} y2=${Math.floor(y) + 14.5} class="tick"></line>
        ${T(923, y, s, "ax")}`)}
      <rect x="878.500" y="106.500" width="50" height="16" fill="#000080" stroke="#c80000"></rect>
      <text x="881" y="114.500" class="lat" style="font-size:12.500px;fill:#d0d8ff;">38.84</text>
      <line x1="0" x2="928" y1="501.500" y2="501.500" class="frame"></line>
    </svg>`;
  }

  private volPane() {
    const gp = (list: [number, string][], cls: string) =>
      list.map(([ox, s]) => svg`<polyline points=${pts(s, ox, 495)} class=${cls}></polyline>`);
    return svg`<svg class="pane" width="928" height="165" viewBox="0 502 928 165">
      ${hline(558)}${hline(607)}
      ${vlines(523, 667)}
      ${volumes(V1, 0)}
      ${volumes(V2, 470)}
      <line x1="3" x2="218" y1="651" y2="651" class="ly2"></line>
      <line x1="218" x2="457" y1="651.500" y2="651.500" class="ly"></line>
      <line x1="337" x2="461" y1="645.500" y2="645.500" class="ly"></line>
      <line x1="470" x2="530" y1="646.500" y2="646.500" class="ly"></line>
      <line x1="533" x2="542" y1="647.500" y2="647.500" class="ly"></line>
      <line x1="545" x2="582" y1="648.500" y2="648.500" class="ly"></line>
      <line x1="587" x2="735" y1="649.500" y2="649.500" class="ly"></line>
      <line x1="740" x2="863" y1="653.500" y2="653.500" class="ly"></line>
      <line x1="320" x2="347" y1="635.500" y2="635.500" class="lw"></line>
      <line x1="743" x2="755" y1="614.500" y2="614.500" class="lw"></line>
      ${gp(GREEN_STROKES, "sg")}
      ${gp(WHITE_STROKES, "sw")}
      ${VOL_LABELS.map(([ox, x, s, c], i) => T(ox + x / 3, 495 + VOL_Y[i] / 3, s, c))}
      ${T(264, 589, "150", "vt")}
      ${T(283, 619, "地里群", "vg")}
      ${T(331, 620, "地里群", "vg")}
      ${T(545, 625, "地里群", "vg")}
      ${T(575, 625, "地里群", "vg")}
      ${T(472, 623, "地", "vw")}
      ${T(539, 624, "地", "vw")}
      ${T(743, 631, "地", "vw")}
      ${T(625, 613, "60", "vt")}
      ${T(746, 598, "30", "vt")}
      ${T(826, 584, "10", "vt")}
      ${T(477, 623, "00", "vt")}
      ${T(625, 530, "5G概念 国资驰援 OLED概念 光刻机", "concept")}
      ${T(830, 530, "染料涂料", "concept")}
      ${T(662, 558, "天", "tian")}
      ${T(787, 555, "天", "tian")}
      ${T(1, 660, "用到未来数据", "future")}
      ${chev(7, 511)}
      ${T(18, 511, "LZ(500)", "lat")}
      ${T(66, 511, "均价: 35.06", "lat lat-w")}
      ${upArrow(131, 511, "arrow-r")}
      ${T(147, 511, "VOLUME: 114095.17", "lat lat-y")}
      ${upArrow(265, 511, "arrow-c", false)}
      ${T(361, 511, ": 4290.00", "lat lat-y")}
      ${T(428, 511, ": 136903.86", "lat")}
      ${upArrow(497, 511, "arrow-r")}
      <line x1="877.500" x2="877.500" y1="502" y2="667" class="frame"></line>
      <line x1="878" x2="884" y1="558.500" y2="558.500" class="tick"></line>
      <line x1="878" x2="884" y1="607.500" y2="607.500" class="tick"></line>
      <line x1="878" x2="881" y1="583.500" y2="583.500" class="tick"></line>
      ${T(923, 558, "20000", "ax")}${T(923, 584, "15000", "ax")}${T(923, 607, "10000", "ax")}
      <rect x="877.500" y="652.500" width="26" height="14" fill="#000" class="frame"></rect>
      ${T(880, 660, "X10", "lat")}
      <line x1="0" x2="928" y1="666.500" y2="666.500" class="frame"></line>
    </svg>`;
  }

  private macdPane() {
    return svg`<svg class="pane" width="928" height="103" viewBox="0 667 928 103">
      ${hline(690)}${hline(715)}
      <line x1="0" x2="878" y1="739.500" y2="739.500" class="dot"></line>
      ${vlines(686, 770)}
      ${macdBars(M1, 0)}
      ${macdBars(M2, 470)}
      <polyline points=${pts(WHITE1, 0, 665)} class="pl-w"></polyline>
      <polyline points=${pts(YEL1, 0, 665)} class="pl-y"></polyline>
      <polyline points=${pts(WHITE2, 470, 665)} class="pl-w"></polyline>
      <polyline points=${pts(YEL2, 470, 665)} class="pl-y"></polyline>
      ${chev(7, 676)}
      ${T(18, 676, "MACD(12,26,9)", "lat")}
      ${T(106, 676, "DIF: 0.63", "lat lat-w")}
      ${upArrow(159, 676, "arrow-r")}
      ${T(170, 676, "DEA: 0.89", "lat lat-y")}
      ${upArrow(228, 676, "arrow-c", false)}
      ${T(239, 676, "MACD: -0.52", "lat lat-m")}
      ${upArrow(311, 676, "arrow-r")}
      <rect x="878" y="668" width="49" height="101" fill="none" stroke="#c00000" stroke-width="2"></rect>
      ${T(923, 691, "3.00", "ax")}${T(923, 716, "1.50", "ax")}${T(923, 739, "0.00", "ax")}
    </svg>`;
  }

  render() {
    return html`
      <div class="menubar">
        <span class="logo"><svg width="20" height="16" viewBox="0 0 20 16"><path d="M1 2h10c5 0 7 3 6 6s-5 6-10 6H3l2-2c5 1 8-1 9-4s-1-4-5-4H5L2 7z" fill="#d01818"></path></svg></span>
        <div class="menu" style="margin-left:3px">
          <span>系统</span><span>功能</span><span>报价</span><span>分析</span><span style="margin-right:10px;margin-left:-4px">期货与商品</span><span style="margin-right:14px">东海龙网</span><span>资讯</span><span>工具</span><span>帮助</span>
        </div>
        <div class="login"><span>交易未登录</span><span>容大感光</span></div>
        <div class="btns">
          <span class="btn w97">龙点金理财商城</span><span class="btn w57">智能客服</span>
          <span class="btn w49">行&nbsp;&nbsp;情</span><span class="btn w49">资&nbsp;&nbsp;讯</span><span class="btn w49">交&nbsp;&nbsp;易</span><span class="btn w49">网&nbsp;&nbsp;站</span>
        </div>
        <div class="wins">
          <span class="win"><svg width="11" height="11" viewBox="0 0 11 11"><path d="M1 9h9" stroke="#555" stroke-width="2"></path></svg></span>
          <span class="win"><svg width="11" height="11" viewBox="0 0 11 11"><path d="M3.500 1.500h6v5h-6zM1.500 4.500h6v5h-6z" fill="none" stroke="#555" stroke-width="1.300"></path></svg></span>
          <span class="win"><svg width="11" height="11" viewBox="0 0 11 11"><path d="M2 2l7 7M9 2l-7 7" stroke="#555" stroke-width="2"></path></svg></span>
        </div>
      </div>
      <div class="toolbar">
        ${["left", "up", "down", "check", "grid", "line", "candle", "win", "f10", "tree", "zi", "f12", "fx", "o"].map(ic)}
        <span class="sep sep1"></span>
        ${["wave", "rsi", "dollar", "move", "pencil"].map(ic)}
        <span class="sep sep2"></span>
        ${["f5", "refresh"].map(ic)}
        ${["1", "5", "15", "30", "60"].map((n) => html`<span class="tb num">${n}</span>`)}
        <span class="tb num on cjk">日</span>
        ${["周", "月", "N", "多", "季", "年"].map((n) => html`<span class="tb cjk">${n}</span>`)}
      </div>
      <div class="strip2"></div><div class="gray-strip"></div>
      <div class="body">
        <div class="left">
          <div class="tabs">
            <div class="tabs-l">
              <span>分时</span><span>1分钟</span><span>5分钟</span><span>15分钟</span><span>30分钟</span><span>60分钟</span><span class="on">日线</span><span>周线</span><span>月线</span><span>多周期</span><span>更多 &gt;</span>
            </div>
            <div class="tabs-r">
              <span>复权</span><span>叠加</span><span>统计</span><span>画线</span><span>F10</span><span>标记</span><span>+自选</span><span>返回</span>
            </div>
          </div>
          ${this.mainPane()}
          ${this.volPane()}
          ${this.macdPane()}
          <div class="axis">
            <span class="cell y">2019年</span>
            <span class="cell" style="width:80px">5</span><span class="cell" style="width:77px">6</span><span class="cell" style="width:52px">7</span>
            <span class="cell" style="width:88px">8</span><span class="cell" style="width:81px">9</span><span class="cell" style="width:72px">10</span>
            <span class="cell" style="width:85px">11</span><span class="cell" style="width:31px">12</span>
            <span class="cell date">2019/12/12/四</span>
            <span class="cell" style="width:45px;border-left:0"></span>
            <span class="cell" style="width:80px">2</span><span class="cell" style="width:30px">3</span>
            <span class="cell end">日线</span>
          </div>
          <div class="row">
            <span style="width:30px">指标</span><span style="width:31px">窗口</span><span class="lat c" style="width:42px">MACD</span><span class="lat" style="width:31px">KDJ</span><span class="lat" style="width:39px">XDLB</span><span class="lat" style="width:50px">HSCOL</span><span style="width:56px">上证副图</span><span style="width:32px">更多</span><span style="width:32px">设置</span>
            <span class="push" style="width:31px">模板</span><span style="width:25px">+</span><span style="width:26px;border-right:0">−</span>
          </div>
          <div class="row row2">
            <span style="width:43px">扩展∧</span><span style="width:56px">关联报价</span><span class="yl" style="width:56px">个股点评</span><span class="yl" style="width:56px">公司报道</span><span class="yl" style="width:56px">公司研究</span>
            <span class="push yl lat" style="width:49px;border-right:0;font-size:12px">图文F10</span>
          </div>
        </div>
        <div class="right">
          <div class="code"><b>300576</b><span>容大感光</span></div>
          <div class="blank"></div>
          <div class="book">
            ${BOOK.map(([p, q], i) => html`<div class="brow">
              <span class="val">${p}</span>
              <span class="bar-wrap"><span class="bar" style="width:${i === 0 ? 102 : 3}px"></span></span>
              <span class="val q">${q}</span></div>`)}
          </div>
          <div class="sec s5">
            <div class="sr"><span class="lb">现价<span class="val">35.09</span></span><span class="lb2">今开<span class="val boxv">35.09</span></span></div>
            <div class="sr"><span class="lb">涨跌<span class="val">3.19</span></span><span class="lb2">最高<span class="val boxv">35.09</span></span></div>
            <div class="sr"><span class="lb">涨幅<span class="val">10.00%</span></span><span class="lb2">最低<span class="val">34.00</span></span></div>
            <div class="sr"><span class="lb">总量<span class="val y">114095</span></span><span class="lb2">量比<span class="val">1.55</span></span></div>
            <div class="sr"><span class="lb">外盘<span class="val">12589</span></span><span class="lb2">内盘<span class="val g">101506</span></span></div>
          </div>
          <div class="sec s3">
            <div class="sr"><span class="lb">换手<span class="val w">19.32%</span></span><span class="lb2">股本<span class="val w">1.20亿</span></span></div>
            <div class="sr"><span class="lb">净资<span class="val w">3.86</span></span><span class="lb2">流通<span class="val w">5904万</span></span></div>
            <div class="sr"><span class="lb">收益<span class="narrow">(三)</span><span class="val w">0.219</span></span><span class="lb2">PE(动)<span class="val w">120.3</span></span></div>
          </div>
          <div class="sec s2">
            <div class="sr flow"><span>净流入额</span><span class="amt">-3.12<i>亿</i></span><span class="pct">-78%</span></div>
            <div class="sr flow"><span>大宗流入</span><span class="amt">-2.39<i>亿</i></span><span class="pct">-60%</span></div>
          </div>
          <div class="ticks">
            ${TICKS.map(([t, q, s, n]) => html`<div class="trow">
              <span class="val tm">${t}</span><span class="val">35.09</span><span class="val qt">${q}</span><span class="val sd">${s}</span><span class="val n">${n}</span></div>`)}
          </div>
          <div class="btabs">
            <span class="on">笔</span><span>价</span><span>细</span><span>势</span><span>联</span><span>值</span><span>主</span><span style="border-right:0">筹</span>
          </div>
          <div class="scroll"><i></i></div>
        </div>
      </div>
      <div class="wm">股海明灯</div>
    `;
  }
}
